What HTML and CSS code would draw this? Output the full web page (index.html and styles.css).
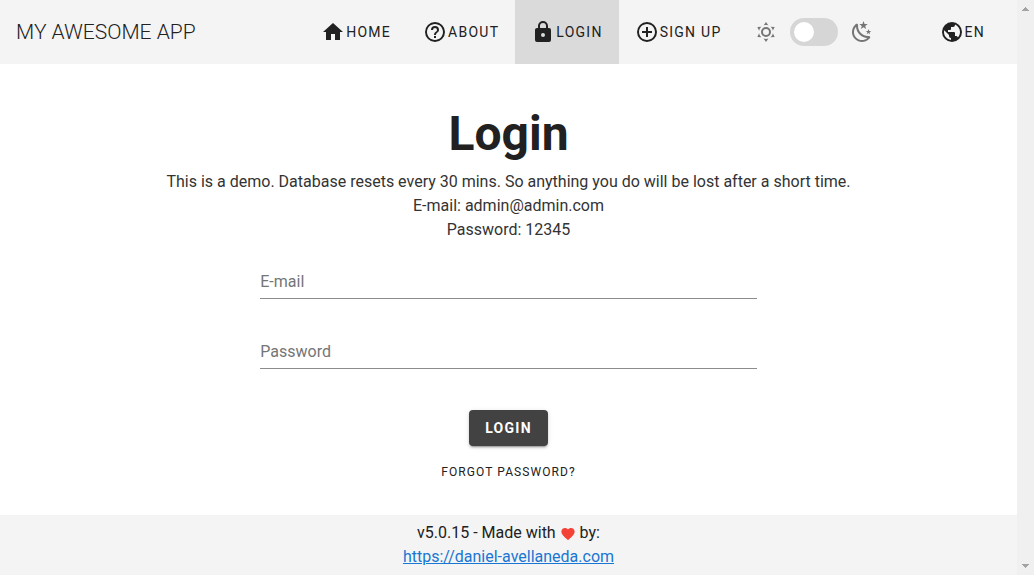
FILE: index.html
```html
<!DOCTYPE html>
<html lang="en">
<head>
<meta charset="utf-8">
<meta name="viewport" content="width=device-width, initial-scale=1">
<title>My Awesome App - Login</title>
<link rel="stylesheet" href="styles.css">
</head>
<body>
<div class="app">
  <header class="bar">
    <div class="brand">MY AWESOME APP</div>
    <nav class="nav">
      <a class="nav-item" href="#home"><svg class="icon" viewBox="0 0 24 24" aria-hidden="true"><path d="M10,20V14H14V20H19V12H22L12,3L2,12H5V20H10Z"/></svg>HOME</a>
      <a class="nav-item" href="#about"><svg class="icon" viewBox="0 0 24 24" aria-hidden="true"><path d="M11,18H13V16H11V18M12,2A10,10 0 0,0 2,12A10,10 0 0,0 12,22A10,10 0 0,0 22,12A10,10 0 0,0 12,2M12,20C7.59,20 4,16.41 4,12C4,7.59 7.59,4 12,4C16.41,4 20,7.59 20,12C20,16.41 16.41,20 12,20M12,6A4,4 0 0,0 8,10H10A2,2 0 0,1 12,8A2,2 0 0,1 14,10C14,12 11,11.75 11,15H13C13,12.75 16,12.5 16,10A4,4 0 0,0 12,6Z"/></svg>ABOUT</a>
      <a class="nav-item active" href="#login" aria-current="page"><svg class="icon" viewBox="0 0 24 24" aria-hidden="true"><path d="M12,17A2,2 0 0,0 14,15C14,13.89 13.1,13 12,13A2,2 0 0,0 10,15A2,2 0 0,0 12,17M18,8A2,2 0 0,1 20,10V20A2,2 0 0,1 18,22H6A2,2 0 0,1 4,20V10C4,8.89 4.9,8 6,8H7V6A5,5 0 0,1 12,1A5,5 0 0,1 17,6V8H18M12,3A3,3 0 0,0 9,6V8H15V6A3,3 0 0,0 12,3Z"/></svg>LOGIN</a>
      <a class="nav-item" href="#signup"><svg class="icon" viewBox="0 0 24 24" aria-hidden="true"><path d="M12,20C7.59,20 4,16.41 4,12C4,7.59 7.59,4 12,4C16.41,4 20,7.59 20,12C20,16.41 16.41,20 12,20M12,2A10,10 0 0,0 2,12A10,10 0 0,0 12,22A10,10 0 0,0 22,12A10,10 0 0,0 12,2M13,7H11V11H7V13H11V17H13V13H17V11H13V7Z"/></svg>SIGN UP</a>
    </nav>
    <div class="theme">
      <svg class="icon" viewBox="0 0 24 24" aria-hidden="true"><path d="M12,7A5,5 0 0,1 17,12A5,5 0 0,1 12,17A5,5 0 0,1 7,12A5,5 0 0,1 12,7M12,9A3,3 0 0,0 9,12A3,3 0 0,0 12,15A3,3 0 0,0 15,12A3,3 0 0,0 12,9M12,2L14.39,5.42C13.65,5.15 12.84,5 12,5C11.16,5 10.35,5.15 9.61,5.42L12,2M3.34,7L7.5,6.65C6.9,7.16 6.36,7.78 5.94,8.5C5.5,9.24 5.25,10 5.11,10.79L3.34,7M3.36,17L5.12,13.23C5.26,14 5.53,14.78 5.95,15.5C6.37,16.24 6.91,16.86 7.5,17.37L3.36,17M20.65,7L18.88,10.79C18.74,10 18.47,9.23 18.05,8.5C17.63,7.78 17.1,7.15 16.5,6.64L20.65,7M20.64,17L16.5,17.36C17.09,16.85 17.62,16.22 18.04,15.5C18.46,14.77 18.73,14 18.87,13.21L20.64,17M12,22L9.59,18.56C10.33,18.83 11.14,19 12,19C12.82,19 13.63,18.83 14.37,18.56L12,22Z"/></svg>
      <input class="switch" type="checkbox" role="switch" aria-label="Dark theme">
      <svg class="icon" viewBox="0 0 24 24" aria-hidden="true"><path d="M17.75,4.09L15.22,6.03L16.13,9.09L13.5,7.28L10.87,9.09L11.78,6.03L9.25,4.09L12.44,4L13.5,1L14.56,4L17.75,4.09M21.25,11L19.61,12.25L20.2,14.23L18.5,13.06L16.8,14.23L17.39,12.25L15.75,11L17.81,10.95L18.5,9L19.19,10.95L21.25,11M18.97,15.95C19.8,15.87 20.69,17.05 20.16,17.8C19.84,18.25 19.5,18.67 19.08,19.07C15.17,23 8.84,23 4.94,19.07C1.03,15.17 1.03,8.83 4.94,4.93C5.34,4.53 5.76,4.17 6.21,3.85C6.96,3.32 8.14,4.21 8.06,5.04C7.79,7.9 8.75,10.87 10.95,13.06C13.14,15.26 16.1,16.22 18.97,15.95M17.33,17.97C14.5,17.81 11.7,16.64 9.53,14.5C7.36,12.31 6.2,9.5 6.04,6.68C3.23,9.82 3.34,14.64 6.35,17.66C9.37,20.67 14.19,20.78 17.33,17.97Z"/></svg>
    </div>
    <button class="nav-item locale" type="button" aria-label="EN, change language"><svg class="icon" viewBox="0 0 24 24" aria-hidden="true"><path d="M17.9,17.39C17.64,16.59 16.89,16 16,16H15V13A1,1 0 0,0 14,12H8V10H10A1,1 0 0,0 11,9V7H13A2,2 0 0,0 15,5V4.59C17.93,5.77 20,8.64 20,12C20,14.08 19.2,15.97 17.9,17.39M11,19.93C7.05,19.44 4,16.08 4,12C4,11.38 4.08,10.78 4.21,10.21L9,15V16A2,2 0 0,0 11,18M12,2A10,10 0 0,0 2,12A10,10 0 0,0 12,22A10,10 0 0,0 22,12A10,10 0 0,0 12,2Z"/></svg>EN</button>
  </header>
  <main class="main">
    <h1 class="title">Login</h1>
    <p class="intro">This is a demo. Database resets every 30 mins. So anything you do will be lost after a short time.<br>E-mail: admin@admin.com<br>Password: 12345</p>
    <form class="form">
      <div class="field">
        <label class="field-label" for="email">E-mail</label>
        <input class="field-input" id="email" type="email">
      </div>
      <div class="field">
        <label class="field-label" for="password">Password</label>
        <input class="field-input" id="password" type="password">
      </div>
      <button class="submit" type="submit">LOGIN</button>
      <a class="forgot" href="#forgot">FORGOT PASSWORD?</a>
    </form>
  </main>
  <footer class="footer">
    <div class="made">v5.0.15 - Made with <svg class="heart" viewBox="0 0 24 24" role="img" aria-label="love"><path d="M12,21.35L10.55,20.03C5.4,15.36 2,12.27 2,8.5C2,5.41 4.42,3 7.5,3C9.24,3 10.91,3.81 12,5.08C13.09,3.81 14.76,3 16.5,3C19.58,3 22,5.41 22,8.5C22,12.27 18.6,15.36 13.45,20.03L12,21.35Z"/></svg> by:</div>
    <a class="author" href="https://daniel-avellaneda.com">https://daniel-avellaneda.com</a>
  </footer>
</div>
<div class="scroll" aria-hidden="true">
  <svg class="arrow" viewBox="0 0 7 4"><path d="M3 0h1v1h1v1h1v1h1v1H0V3h1V2h1V1h1z"/></svg>
  <svg class="arrow" viewBox="0 0 7 4"><path d="M0 0h7v1H6v1H5v1H4v1H3V3H2V2H1V1H0z"/></svg>
</div>
</body>
</html>
```
FILE: styles.css
```css
* {
  box-sizing: border-box;
}

body {
  margin: 0;
  min-height: 100vh;
  display: flex;
  background: #fff;
  color: #212121;
  font: 400 16px/24px Roboto, "Liberation Sans", sans-serif;
}

.app {
  flex: 1;
  display: flex;
  flex-direction: column;
}

.bar {
  display: flex;
  align-items: stretch;
  height: 64px;
  padding: 0 16px;
  background: #f4f4f4;
}

.brand {
  margin-right: auto;
  align-self: center;
  font-size: 21px;
  font-weight: 300;
}

.nav {
  display: flex;
}

.nav-item {
  display: flex;
  align-items: center;
  gap: 1px;
  padding: 0 16px;
  border: 0;
  background: none;
  color: inherit;
  font: 400 14px/24px Roboto, "Liberation Sans", sans-serif;
  letter-spacing: 0.09em;
  text-decoration: none;
}

.active {
  background: #dadada;
}

.icon {
  width: 24px;
  height: 24px;
  fill: currentColor;
}

.theme {
  display: flex;
  align-items: center;
  gap: 12px;
  margin: 0 50px 0 16px;
  color: #757575;
}

.switch {
  appearance: none;
  display: flex;
  align-items: center;
  width: 48px;
  height: 28px;
  margin: 0;
  padding: 4px;
  border-radius: 14px;
  background: #d6d6d6;
}

.switch::before {
  content: "";
  width: 20px;
  height: 20px;
  border-radius: 50%;
  background: #fff;
}

.switch:checked {
  justify-content: flex-end;
}

.main {
  flex: 1;
  padding: 44px 12px 32px;
  text-align: center;
}

.title {
  margin: 0 0 10px;
  font-size: 48px;
  line-height: 52px;
  font-weight: 700;
}

.intro {
  margin: 0;
  color: #333;
}

.form {
  display: flex;
  flex-direction: column;
  align-items: center;
  width: 50%;
  margin: 23px auto 0;
}

.field {
  display: grid;
  width: 100%;
  margin-bottom: 36px;
  border-bottom: 1px solid #8c8c8c;
}

.field-label,
.field-input {
  grid-area: 1 / 1;
}

.field-label {
  align-self: center;
  text-align: left;
  color: #757575;
}

.field-input {
  width: 100%;
  height: 33px;
  padding: 0;
  border: 0;
  outline: 0;
  background: none;
  font: inherit;
}

.submit {
  height: 36px;
  margin: 5px 0 16px;
  padding: 0 16px;
  border: 0;
  border-radius: 4px;
  background: #424242;
  box-shadow: 0 3px 1px -2px rgba(0, 0, 0, 0.2), 0 2px 2px rgba(0, 0, 0, 0.14), 0 1px 5px rgba(0, 0, 0, 0.12);
  color: #fff;
  font: 700 14px/20px Roboto, "Liberation Sans", sans-serif;
  letter-spacing: 0.09em;
}

.forgot {
  color: inherit;
  font-size: 12px;
  line-height: 20px;
  font-weight: 400;
  letter-spacing: 0.09em;
  text-decoration: none;
}

.footer {
  padding: 6px 16px;
  background: #f4f4f4;
  text-align: center;
}

.heart {
  width: 16px;
  height: 16px;
  vertical-align: middle;
  fill: #f44336;
}

.author {
  color: #1976d2;
}

.scroll {
  display: flex;
  flex-direction: column;
  justify-content: space-between;
  align-items: center;
  width: 17px;
  padding: 7px 0;
  background: #f0f0f0;
}

.arrow {
  width: 7px;
  height: 4px;
  fill: #a3a3a3;
}
```
